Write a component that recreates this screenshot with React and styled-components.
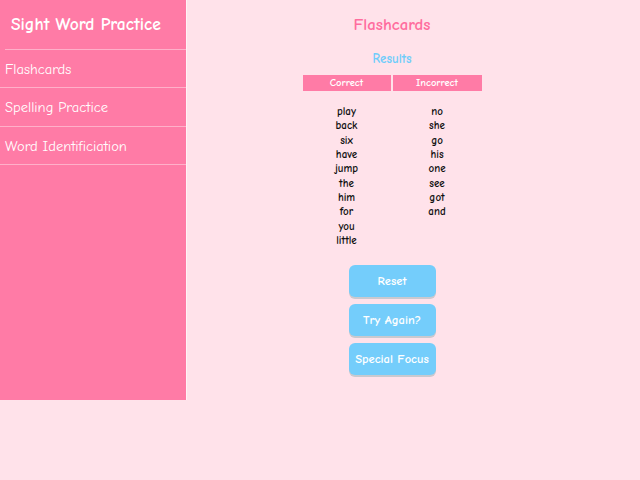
import styled, { createGlobalStyle } from 'styled-components';

const GlobalStyle = createGlobalStyle`
  html, body {
    margin: 0;
    padding: 0;
    background: #ffe2ea;
    font-family: "Comic Sans MS", "Comic Neue", "Open Sans", sans-serif;
  }
`;

const Page = styled.div`
  display: flex;
  align-items: flex-start;
  width: 640px;
  height: 480px;
`;

const Sidebar = styled.nav`
  width: 186px;
  height: 400px;
  flex-shrink: 0;
  background: #ff7ba6;
  box-shadow: 1px 0 0 #fff3f6;
`;

const Brand = styled.h1`
  margin: 0 0 0 5px;
  height: 49px;
  line-height: 49px;
  padding-left: 6px;
  color: #fff;
  font-size: 17.5px;
  font-weight: bold;
  border-bottom: 1px solid #ffb0c9;
`;

const NavItem = styled.a`
  display: block;
  height: 37.3px;
  line-height: 39px;
  padding-left: 5px;
  color: #fff;
  font-size: 14.5px;
  border-bottom: 1px solid #ffb0c9;
  cursor: pointer;
`;

const Main = styled.main`
  flex: 1;
  display: flex;
  flex-direction: column;
  align-items: center;
  padding-right: 42px;
`;

const Heading = styled.h2`
  margin: 15px 0 0;
  color: #ff6d9e;
  font-size: 16.8px;
  font-weight: bold;
  line-height: 20px;
`;

const SubHeading = styled.h3`
  margin: 16px 0 0;
  color: #6fcdfb;
  font-size: 13px;
  font-weight: bold;
  line-height: 16px;
`;

const Table = styled.div`
  margin-top: 8px;
  display: grid;
  grid-template-columns: 88px 89px;
  column-gap: 2px;
`;

const HeadCell = styled.div`
  height: 16px;
  line-height: 16px;
  background: #ff7ba6;
  color: #fff;
  font-size: 10.5px;
  font-weight: bold;
  text-align: center;
`;

const WordList = styled.div`
  padding-top: 14px;
  text-align: center;
  font-size: 11px;
  font-weight: bold;
  line-height: 14.35px;
  color: #111;
`;

const Buttons = styled.div`
  margin-top: 17px;
  display: flex;
  flex-direction: column;
  gap: 7px;
`;

const Button = styled.button`
  width: 87px;
  height: 32px;
  border: none;
  border-radius: 6px;
  background: #74cdfb;
  color: #fff;
  font-family: inherit;
  font-size: 12.5px;
  font-weight: bold;
  box-shadow: 0 2px 0 #c9c9cf;
  cursor: pointer;
`;

const correct = ['play', 'back', 'six', 'have', 'jump', 'the', 'him', 'for', 'you', 'little'];
const incorrect = ['no', 'she', 'go', 'his', 'one', 'see', 'got', 'and'];

const App = () => {
  return (
    <Page>
      <GlobalStyle />
      <Sidebar>
        <Brand>Sight Word Practice</Brand>
        <NavItem>Flashcards</NavItem>
        <NavItem>Spelling Practice</NavItem>
        <NavItem>Word Identificiation</NavItem>
      </Sidebar>
      <Main>
        <Heading>Flashcards</Heading>
        <SubHeading>Results</SubHeading>
        <Table>
          <HeadCell>Correct</HeadCell>
          <HeadCell>Incorrect</HeadCell>
          <WordList>
            {correct.map((w) => (
              <div key={w}>{w}</div>
            ))}
          </WordList>
          <WordList>
            {incorrect.map((w) => (
              <div key={w}>{w}</div>
            ))}
          </WordList>
        </Table>
        <Buttons>
          <Button>Reset</Button>
          <Button>Try Again?</Button>
          <Button>Special Focus</Button>
        </Buttons>
      </Main>
    </Page>
  );
};

export default App;
